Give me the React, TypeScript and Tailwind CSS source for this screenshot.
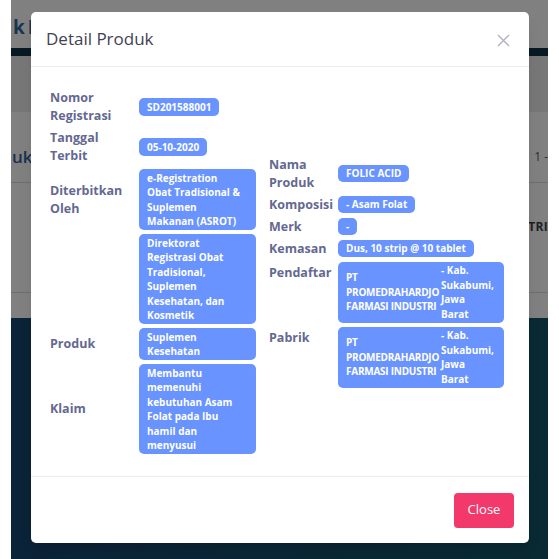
import React from 'react';

const font = { fontFamily: '"Open Sans", "Noto Sans", sans-serif' };

const Badge: React.FC<{ children: React.ReactNode; className?: string }> = ({ children, className = '' }) => (
  <div
    className={`rounded-[5px] bg-[#6993ff] px-2 py-[1.5px] text-[10px] font-bold leading-[14.5px] text-white ${className}`}
  >
    {children}
  </div>
);

const Label: React.FC<{ children: React.ReactNode; w: string }> = ({ children, w }) => (
  <div className={`${w} shrink-0 text-[12.5px] font-bold leading-[18px] text-[#646892]`}>{children}</div>
);

const Lines: React.FC<{ lines: string[] }> = ({ lines }) => (
  <>
    {lines.map((l, i) => (
      <div key={i}>{l}</div>
    ))}
  </>
);

const Company: React.FC = () => (
  <Badge className="w-[166px]">
    <div className="flex">
      <div className="w-[95px] shrink-0 self-center tracking-[-0.25px]">
        <Lines lines={['PT', 'PROMEDRAHARDJO', 'FARMASI INDUSTRI']} />
      </div>
      <div className="flex-1">
        <Lines lines={['- Kab.', 'Sukabumi,', 'Jawa', 'Barat']} />
      </div>
    </div>
  </Badge>
);

export default function App() {
  const leftRows: { label?: React.ReactNode; value: React.ReactNode }[] = [
    { label: <>Nomor<br />Registrasi</>, value: <Badge>SD201588001</Badge> },
    { label: <>Tanggal<br />Terbit</>, value: <Badge>05-10-2020</Badge> },
    {
      label: <>Diterbitkan<br />Oleh</>,
      value: (
        <Badge className="w-[117px]">
          <Lines lines={['e-Registration', 'Obat Tradisional &', 'Suplemen', 'Makanan (ASROT)']} />
        </Badge>
      ),
    },
    {
      value: (
        <Badge className="w-[117px]">
          <Lines lines={['Direktorat', 'Registrasi Obat', 'Tradisional,', 'Suplemen', 'Kesehatan, dan', 'Kosmetik']} />
        </Badge>
      ),
    },
    {
      label: 'Produk',
      value: (
        <Badge className="w-[117px]">
          <Lines lines={['Suplemen', 'Kesehatan']} />
        </Badge>
      ),
    },
    {
      label: 'Klaim',
      value: (
        <Badge className="w-[117px]">
          <Lines lines={['Membantu', 'memenuhi', 'kebutuhan Asam', 'Folat pada Ibu', 'hamil dan', 'menyusui']} />
        </Badge>
      ),
    },
  ];

  const rightRows: { label: React.ReactNode; value: React.ReactNode; top?: boolean }[] = [
    { label: <>Nama<br />Produk</>, value: <Badge>FOLIC ACID</Badge> },
    { label: 'Komposisi', value: <Badge>- Asam Folat</Badge> },
    { label: 'Merk', value: <Badge>-</Badge> },
    { label: 'Kemasan', value: <Badge>Dus, 10 strip @ 10 tablet</Badge> },
    { label: 'Pendaftar', value: <Company />, top: true },
    { label: 'Pabrik', value: <Company />, top: true },
  ];

  return (
    <div className="relative h-[559px] w-[559px] overflow-hidden bg-white" style={font}>
      {/* page behind the modal */}
      <div className="mx-[11px] flex h-full flex-col overflow-hidden bg-[#808080]">
        <div className="flex h-[48px] shrink-0 items-center pl-[2px] pt-[6px] text-[19px] font-bold text-[#173452]">
          <span>k</span>
          <span className="ml-[3px]">E</span>
        </div>
        <div className="h-[8px] shrink-0 bg-[#071a24]" />
        <div className="h-[56px] shrink-0 bg-[#777777]" />
        <div className="flex h-[71px] shrink-0 items-start justify-between border-b border-[#6e6e6e] pl-[1px] pt-[33px]">
          <span className="text-[17px] font-semibold leading-[24px] text-[#17304f]">uk</span>
          <span className="pt-[3px] text-[12px] text-[#2e2e2e]">1 -</span>
        </div>
        <div className="flex h-[110px] shrink-0 justify-end border-b border-[#6e6e6e] pt-[35px]">
          <span className="text-[12px] font-bold tracking-wide text-[#1f1f1f]">TRI</span>
        </div>
        <div className="h-[25px] shrink-0" />
        <div className="flex-1 bg-gradient-to-r from-[#0b2338] to-[#092a33]" />
      </div>

      {/* modal */}
      <div className="absolute left-[31px] top-[12px] flex h-[531px] w-[498px] flex-col rounded-[5px] bg-white shadow-lg">
        <div className="flex h-[55px] shrink-0 items-center justify-between border-b border-[#ebedf3] pl-[15px] pr-[19px]">
          <h2 className="text-[17px] font-medium text-[#3f4254]">Detail Produk</h2>
          <svg width="13" height="13" viewBox="0 0 13 13" className="mt-[2px]">
            <path d="M1 1 L12 12 M12 1 L1 12" stroke="#b5b5c3" strokeWidth="1.5" />
          </svg>
        </div>

        <div className="flex flex-1 items-center gap-[14px] px-[19px]">
          <div className="flex w-[205px] flex-col">
            {leftRows.map((r, i) => (
              <div key={i} className="flex items-center py-[2px]">
                <Label w="w-[89px]">{r.label}</Label>
                <div className="flex">{r.value}</div>
              </div>
            ))}
          </div>
          <div className="flex flex-col">
            {rightRows.map((r, i) => (
              <div key={i} className={`flex py-[2px] ${r.top ? 'items-start' : 'items-center'}`}>
                <Label w={`w-[69px] ${r.top ? 'pt-[2px]' : ''}`}>{r.label}</Label>
                <div className="flex">{r.value}</div>
              </div>
            ))}
          </div>
        </div>

        <div className="flex h-[67px] shrink-0 items-center justify-end border-t border-[#ebedf3] pr-[15px]">
          <button className="h-[35px] w-[60px] rounded-[4px] bg-[#f3386b] text-[13px] text-white">Close</button>
        </div>
      </div>
    </div>
  );
}
